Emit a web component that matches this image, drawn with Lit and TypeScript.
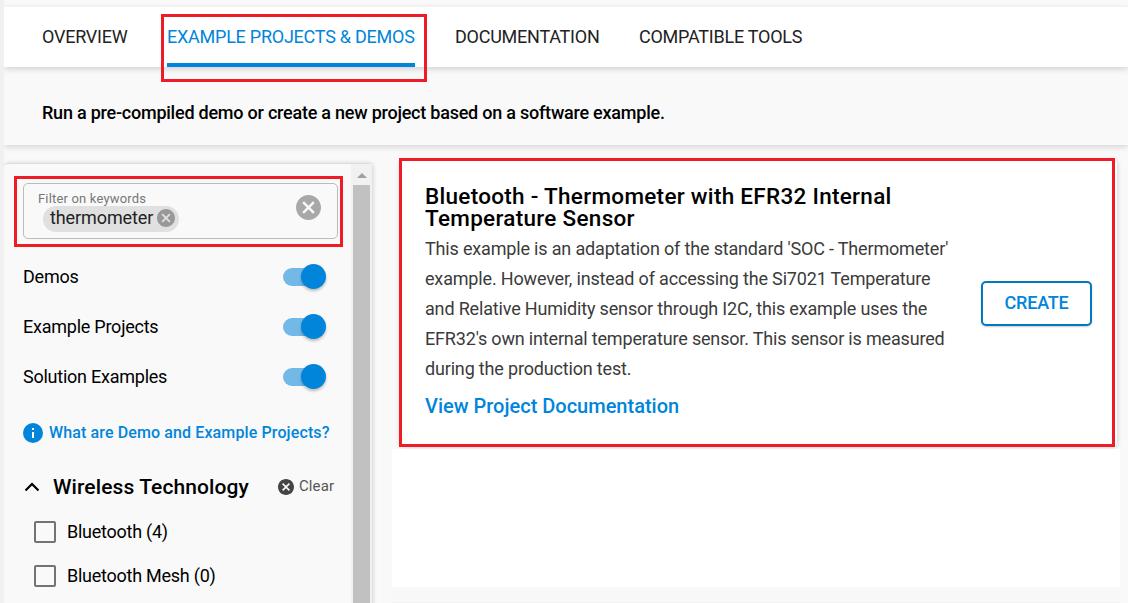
import { LitElement, html, css, svg } from "lit";
import { customElement, property } from "lit/decorators.js";

@customElement("cancel-icon")
class CancelIcon extends LitElement {
  static styles = css`
    :host { display: block; flex: none; }
    svg { display: block; width: 100%; height: 100%; fill: currentColor; }
  `;
  render() {
    return html`<svg viewBox="2 2 20 20">${svg`<path d="M12 2C6.47 2 2 6.47 2 12s4.47 10 10 10 10-4.47 10-10S17.53 2 12 2zm5 13.59L15.59 17 12 13.41 8.41 17 7 15.59 10.59 12 7 8.41 8.41 7 12 10.59 15.59 7 17 8.41 13.41 12 17 15.59z"/>`}</svg>`;
  }
}

@customElement("toggle-row")
class ToggleRow extends LitElement {
  @property() label = "";
  static styles = css`
    :host { display: flex; height: 50px; align-items: center; justify-content: space-between; font-size: 18px; }
    .label { letter-spacing: -.24px; }
    .track { width: 36px; height: 18px; border-radius: 9px; background: #73b9e8; display: flex; align-items: center; margin: 1px 13px 0 0; }
    .knob { width: 25px; height: 25px; flex: none; border-radius: 50%; background: #0085db; margin: -1px 0 0 18px; box-shadow: 0 2px 3px rgba(0,0,0,.25); }
  `;
  render() {
    return html`<span class="label">${this.label}</span><span class="track"><span class="knob"></span></span>`;
  }
}

@customElement("app-root")
class AppRoot extends LitElement {
  static styles = css`
    * { box-sizing: border-box; }
    :host { display: block; position: relative; box-sizing: border-box; width: 1128px; height: 603px; overflow: hidden; background: #f9f9f9; font-family: Roboto, sans-serif; font-size: 18px; color: #000; border-left: 4px solid #f0f0f0; padding-top: 7px; }
    .nav { height: 60px; background: #fff; display: flex; gap: 40px; padding-left: 38px; color: #222; box-shadow: 0 2px 6px rgba(0,0,0,.16); position: relative; z-index: 1; letter-spacing: -.24px; }
    .tab { height: 60px; line-height: 60px; white-space: nowrap; }
    .tab.on { color: #0085db; border-bottom: 4px solid #0085db; }
    .t1 { width: 85px; } .t2 { width: 248px; } .t3 { width: 144px; }
    .sub { height: 78px; padding-left: 38px; line-height: 91px; font-weight: 500; letter-spacing: -.23px; white-space: nowrap; box-shadow: 0 2px 6px rgba(0,0,0,.15); }
    .body { display: flex; height: 458px; }
    .side { width: 368px; height: 470px; margin-top: 18px; border-top: 1px solid #ddd; border-radius: 4px; display: flex; box-shadow: 1px 0 4px rgba(0,0,0,.16); }
    .panel { width: 347px; padding: 19px 13px 0 19px; }
    .scroll { width: 21px; background: #f1f1f1; padding: 9px 2px 0 2px; display: flex; flex-direction: column; align-items: center; }
    .scroll svg { width: 10px; height: 5px; margin-bottom: 7px; }
    .thumb { width: 17px; flex: 1; background: #c1c1c1; }
    .field { width: 315px; height: 56px; border: 1px solid #bbb; border-radius: 5px; display: flex; justify-content: space-between; padding: 7px 16px 0 14px; }
    .hint { font-size: 13px; line-height: 15px; letter-spacing: .17px; color: #777; white-space: nowrap; }
    .chip { margin-left: 5px; width: 136px; height: 26px; border-radius: 13px; background: #e0e0e0; display: flex; align-items: center; justify-content: space-between; padding: 0 4px 3px 7px; color: #222; letter-spacing: -.1px; }
    .chip cancel-icon { width: 18px; height: 18px; color: #999; }
    .field > cancel-icon { width: 25px; height: 25px; color: #a8a8a8; margin-top: 4px; }
    .toggles { margin-top: 12px; width: 309px; }
    .info { display: flex; height: 20px; align-items: center; gap: 6px; margin-top: 22px; color: #0085db; font-size: 16px; font-weight: 500; letter-spacing: .12px; white-space: nowrap; }
    .info span { padding-bottom: 2px; }
    .info svg { width: 20px; height: 20px; flex: none; }
    .group { display: flex; align-items: center; height: 24px; margin: 32px 0 0 1px; }
    .chev { width: 16px; height: 10px; margin-right: 13px; }
    .group h2 { margin: 0; width: 224.500px; font-size: 21px; line-height: 24px; font-weight: 500; letter-spacing: .1px; white-space: nowrap; }
    .group cancel-icon { width: 16px; height: 16px; color: #444; }
    .clear { font-size: 15px; color: #555; margin-left: 5.500px; line-height: 22px; padding-bottom: 2px; letter-spacing: .1px; }
    .checks { padding: 11px 0 0 11px; letter-spacing: -.25px; }
    .check { display: flex; align-items: center; height: 44px; gap: 11px; }
    .check span:last-child { padding-bottom: 2px; }
    .box { width: 22px; height: 22px; border: 2px solid #737373; border-radius: 2px; }
    .main { margin: 15px 0 0 20px; width: 728px; }
    .card { width: 717px; height: 286px; margin: 0 0 0 8px; background: #fff; border-radius: 4px; padding: 25px 25px 0; display: flex; box-shadow: 0 1px 5px rgba(0,0,0,.2); }
    .copy { width: 556px; }
    .copy h1 { margin: 0; font-size: 22.500px; line-height: 22px; font-weight: 500; letter-spacing: .29px; white-space: nowrap; }
    .copy p { margin: 5px 0 0; line-height: 30px; color: #3b3b3b; letter-spacing: -.17px; white-space: nowrap; }
    .doc { color: #0085db; font-size: 20px; line-height: 30px; font-weight: 500; margin-top: 7px; }
    .create { margin-top: 96px; width: 111px; height: 45px; border: 2px solid #0078c4; border-radius: 5px; background: #fff; color: #0085db; font: 500 18px Roboto, sans-serif; letter-spacing: -.2px; padding: 0 0 2px; box-shadow: 0 1px 2px rgba(0,0,0,.2); }
    .blank { position: relative; height: 138px; margin-top: 3px; background: #fff; }
    .after { height: 16px; border-bottom: 1px solid #f2f2f2; background: #f8f8f8; }
    .mark { position: absolute; z-index: 5; border: 3px solid #ee1c25; pointer-events: none; }
    .m1 { left: 157px; top: 14px; width: 266px; height: 68px; }
    .m2 { left: 10px; top: 176px; width: 329px; height: 71px; }
    .m3 { left: 395px; top: 158px; width: 716px; height: 289px; }
  `;
  render() {
    return html`
      <nav class="nav">
        <span class="tab t1">OVERVIEW</span><span class="tab on t2">EXAMPLE PROJECTS &amp; DEMOS</span>
        <span class="tab t3">DOCUMENTATION</span><span class="tab t4">COMPATIBLE TOOLS</span>
      </nav>
      <div class="sub">Run a pre-compiled demo or create a new project based on a software example.</div>
      <div class="body">
        <aside class="side">
          <div class="panel">
            <div class="field">
              <div><div class="hint">Filter on keywords</div>
                <div class="chip"><span>thermometer</span><cancel-icon></cancel-icon></div></div>
              <cancel-icon></cancel-icon>
            </div>
            <div class="toggles">
              ${["Demos", "Example Projects", "Solution Examples"].map(l => html`<toggle-row label=${l}></toggle-row>`)}
            </div>
            <div class="info">
              <svg viewBox="0 0 20 20"><circle cx="10" cy="10" r="10" fill="#0085db"/><path d="M9 5h2v2H9zM9 9h2v6H9z" fill="#fff"/></svg>
              <span>What are Demo and Example Projects?</span>
            </div>
            <div class="group">
              <svg class="chev" viewBox="0 0 16 10"><path d="M1.5 8.500 8 2l6.500 6.500" fill="none" stroke="#000" stroke-width="2.200"/></svg>
              <h2>Wireless Technology</h2><cancel-icon></cancel-icon><span class="clear">Clear</span>
            </div>
            <div class="checks">
              ${["Bluetooth (4)", "Bluetooth Mesh (0)"].map(l => html`<div class="check"><span class="box"></span><span>${l}</span></div>`)}
            </div>
          </div>
          <div class="scroll"><svg viewBox="0 0 10 5"><path d="M0 5 5 0l5 5z" fill="#a0a0a0"/></svg><div class="thumb"></div></div>
        </aside>
        <main class="main">
          <section class="card">
            <div class="copy">
              <h1>Bluetooth - Thermometer with EFR32 Internal<br>Temperature Sensor</h1>
              <p>This example is an adaptation of the standard 'SOC - Thermometer'<br>example. However, instead of accessing the Si7021 Temperature<br>and Relative Humidity sensor through I2C, this example uses the<br>EFR32's own internal temperature sensor. This sensor is measured<br>during the production test.</p>
              <div class="doc">View Project Documentation</div>
            </div>
            <button class="create">CREATE</button>
          </section>
          <div class="blank"></div>
          <div class="after"></div>
        </main>
      </div>
      <div class="mark m1"></div><div class="mark m2"></div><div class="mark m3"></div>
    `;
  }
}
